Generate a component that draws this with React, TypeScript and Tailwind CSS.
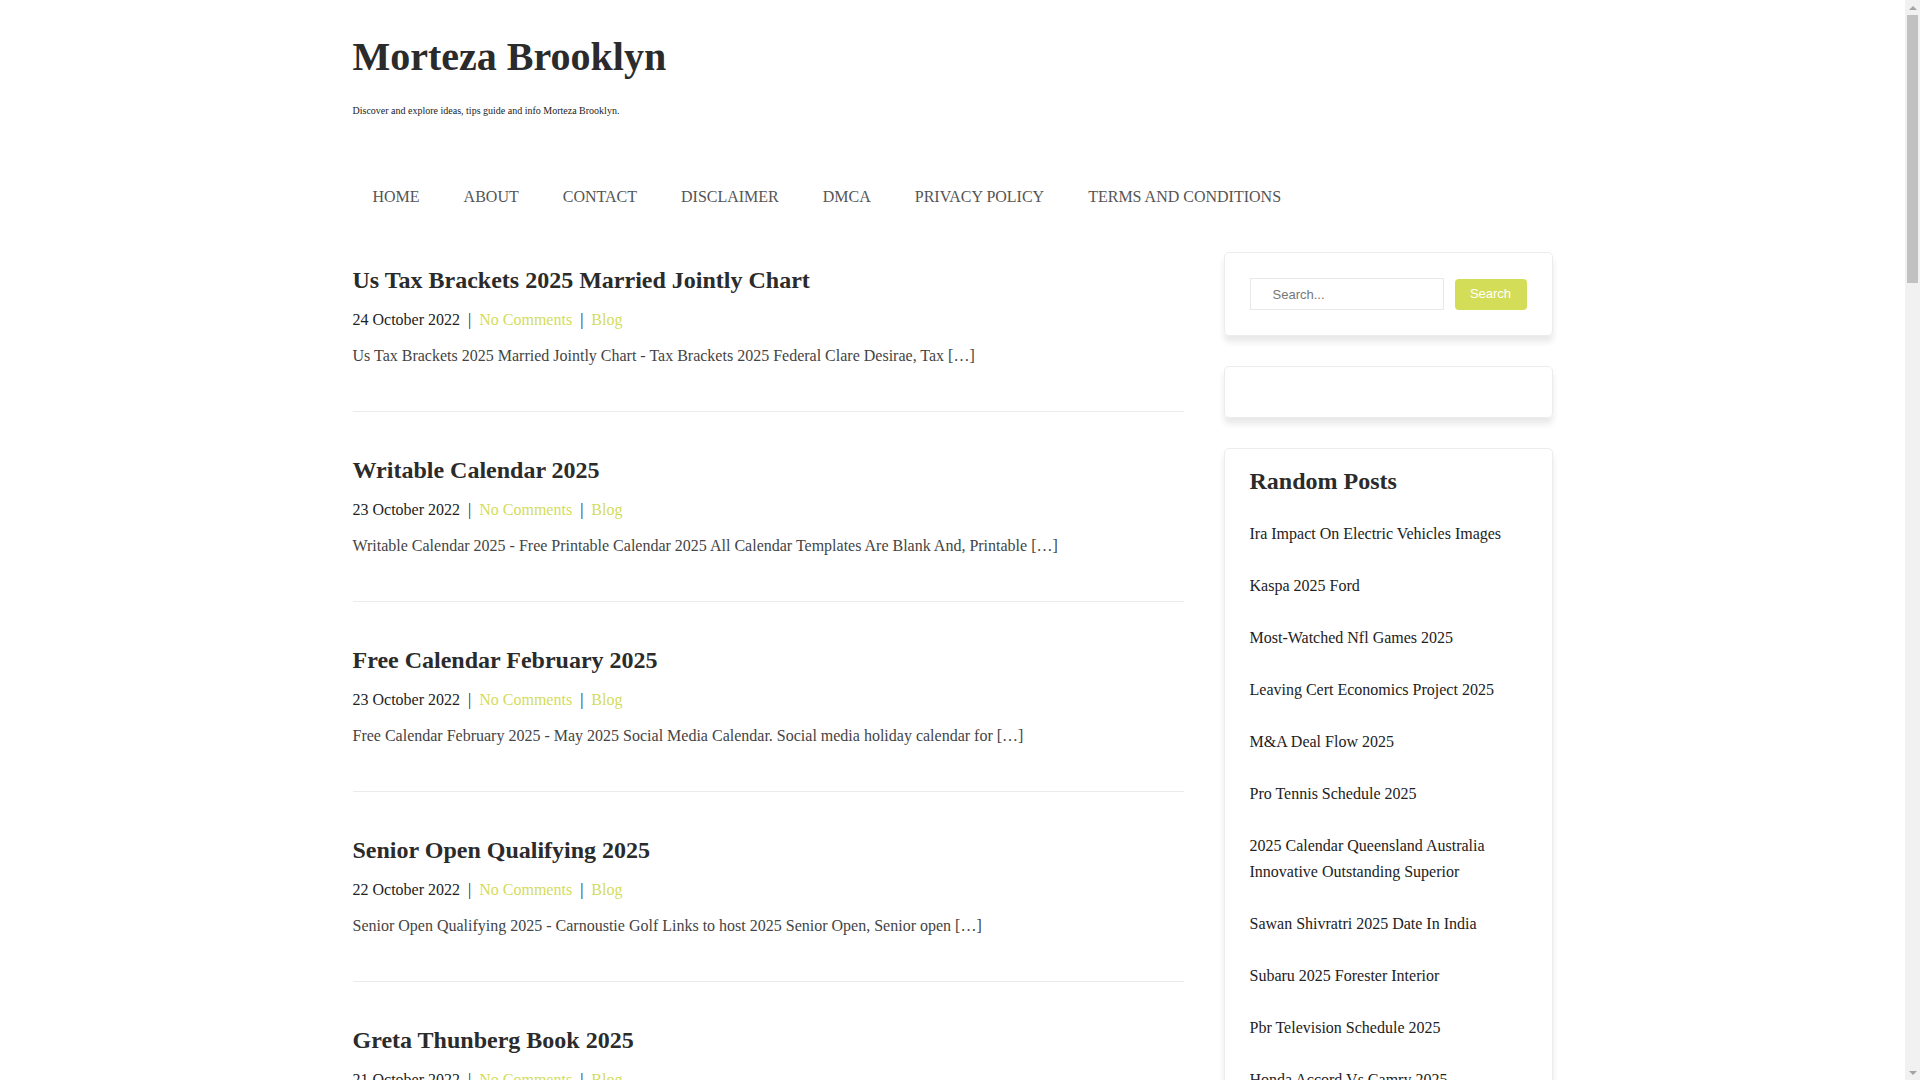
import React from 'react';

const NAV = ['HOME', 'ABOUT', 'CONTACT', 'DISCLAIMER', 'DMCA', 'PRIVACY POLICY', 'TERMS AND CONDITIONS'];

const POSTS = [
  {
    title: 'Us Tax Brackets 2025 Married Jointly Chart',
    date: '24 October 2022',
    excerpt: 'Us Tax Brackets 2025 Married Jointly Chart - Tax Brackets 2025 Federal Clare Desirae, Tax […]',
  },
  {
    title: 'Writable Calendar 2025',
    date: '23 October 2022',
    excerpt: 'Writable Calendar 2025 - Free Printable Calendar 2025 All Calendar Templates Are Blank And, Printable […]',
  },
  {
    title: 'Free Calendar February 2025',
    date: '23 October 2022',
    excerpt: 'Free Calendar February 2025 - May 2025 Social Media Calendar. Social media holiday calendar for […]',
  },
  {
    title: 'Senior Open Qualifying 2025',
    date: '22 October 2022',
    excerpt: 'Senior Open Qualifying 2025 - Carnoustie Golf Links to host 2025 Senior Open, Senior open […]',
  },
  {
    title: 'Greta Thunberg Book 2025',
    date: '21 October 2022',
    excerpt: 'Greta Thunberg Book 2025 […]',
  },
];

const RANDOM = [
  'Ira Impact On Electric Vehicles Images',
  'Kaspa 2025 Ford',
  'Most-Watched Nfl Games 2025',
  'Leaving Cert Economics Project 2025',
  'M&A Deal Flow 2025',
  'Pro Tennis Schedule 2025',
  '2025 Calendar Queensland Australia Innovative Outstanding Superior',
  'Sawan Shivratri 2025 Date In India',
  'Subaru 2025 Forester Interior',
  'Pbr Television Schedule 2025',
  'Honda Accord Vs Camry 2025',
];

function Scrollbar() {
  return (
    <div className="fixed top-0 right-0 h-screen w-[15px] bg-[#f1f1f1] flex flex-col">
      <div className="h-[15px] flex items-center justify-center">
        <div className="w-0 h-0 border-x-[4px] border-x-transparent border-b-[4px] border-b-[#a3a3a3]" />
      </div>
      <div className="h-[268px] mx-[2px] bg-[#c1c1c1]" />
      <div className="flex-1" />
      <div className="h-[15px] flex items-center justify-center">
        <div className="w-0 h-0 border-x-[4px] border-x-transparent border-t-[4px] border-t-[#a3a3a3]" />
      </div>
    </div>
  );
}

export default function App() {
  return (
    <div className="bg-white pr-[15px] font-['Liberation_Serif',serif] text-[#2b2b2b]">
      <div className="w-[1200px] mx-auto">
        {/* Header */}
        <header className="pt-[33px]">
          <h1 className="text-[40px] leading-[48px] font-bold text-[#2b2b2b]">Morteza Brooklyn</h1>
          <p className="mt-[22px] text-[10px] leading-[15px] text-[#222]">
            Discover and explore ideas, tips guide and info Morteza Brooklyn.
          </p>
        </header>

        {/* Navigation */}
        <nav className="mt-[67px] flex gap-1">
          {NAV.map((item) => (
            <a key={item} href="#" className="px-5 text-[16px] leading-[24px] text-[#555]">
              {item}
            </a>
          ))}
        </nav>

        <div className="mt-[43px] flex gap-[40px] items-start">
          {/* Posts */}
          <main className="w-[831px] pt-[13px]">
            {POSTS.map((post, i) => (
              <article
                key={post.title}
                className={i === 0 ? 'pb-[43px] border-b border-[#ebebeb]' : 'pt-[43px] pb-[43px] border-b border-[#ebebeb]'}
              >
                <h2 className="text-[24px] leading-[30px] font-bold text-[#2b2b2b] mb-[13px]">
                  <a href="#">{post.title}</a>
                </h2>
                <div className="text-[16px] leading-[24px] text-[#222] mb-[12px] whitespace-pre">
                  {post.date}
                  {'  |  '}
                  <a href="#" className="text-[#d3dc5c]">No Comments</a>
                  {'  |  '}
                  <a href="#" className="text-[#d3dc5c]">Blog</a>
                </div>
                <p className="text-[16px] leading-[24px] text-[#444]">{post.excerpt}</p>
              </article>
            ))}
          </main>

          {/* Sidebar */}
          <aside className="w-[329px] flex flex-col gap-[30px]">
            <div className="border border-[#ececec] rounded-[5px] p-[25px] shadow-[0_6px_6px_rgba(0,0,0,0.09)]">
              <form className="flex items-center gap-[11px] font-['Liberation_Sans',Arial,sans-serif]">
                <input
                  type="text"
                  placeholder="Search..."
                  className="w-[194px] h-[32px] border border-[#e8e8e8] pl-[22px] text-[13px] text-[#333] placeholder:text-[#777] outline-none"
                />
                <button
                  type="button"
                  className="w-[73px] h-[31px] rounded-[4px] bg-[#d3dd58] text-white text-[13px]"
                >
                  Search
                </button>
              </form>
            </div>

            <div className="border border-[#ececec] rounded-[5px] p-[25px] shadow-[0_6px_6px_rgba(0,0,0,0.09)]" />

            <div className="border border-[#ececec] rounded-[5px] px-[25px] pt-[17px] pb-[25px] shadow-[0_6px_6px_rgba(0,0,0,0.09)]">
              <h3 className="text-[24px] leading-[30px] font-bold text-[#2b2b2b]">Random Posts</h3>
              <ul className="mt-[12px]">
                {RANDOM.map((title) => (
                  <li key={title} className="py-[13px] text-[16px] leading-[26px] text-[#222]">
                    <a href="#">{title}</a>
                  </li>
                ))}
              </ul>
            </div>
          </aside>
        </div>
      </div>
      <Scrollbar />
    </div>
  );
}
